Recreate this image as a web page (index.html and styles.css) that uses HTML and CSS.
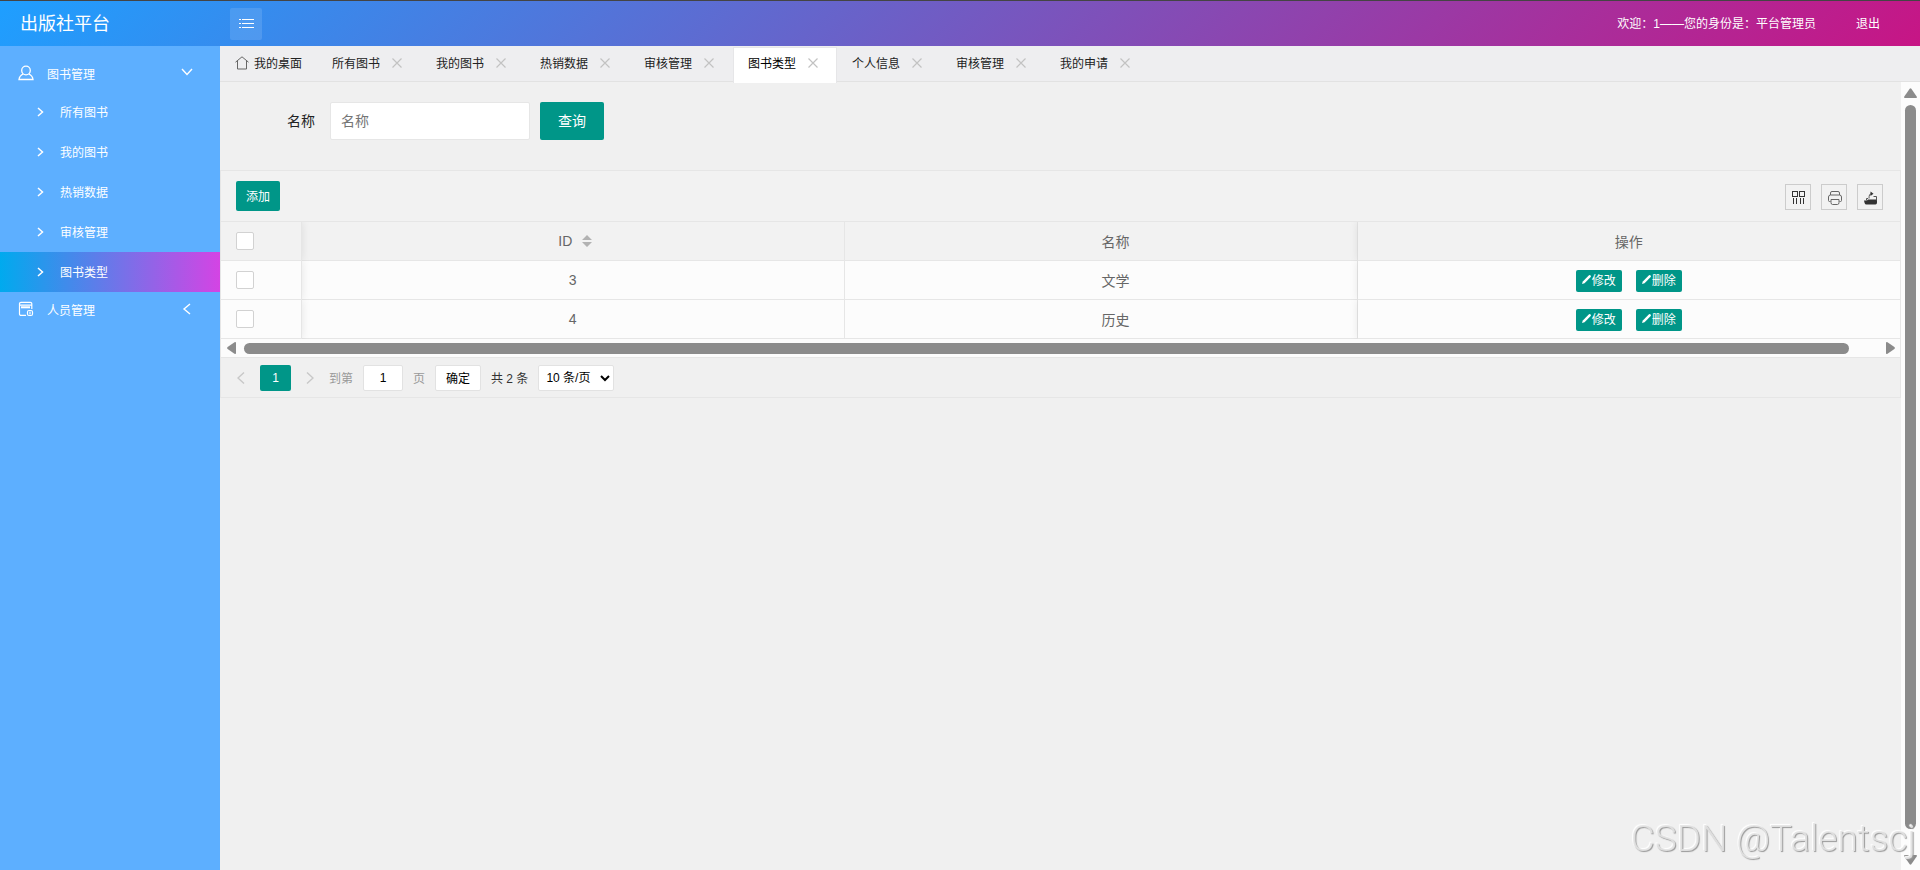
FILE: index.html
```html
<!DOCTYPE html>
<html lang="zh-CN">
<head>
  <meta charset="UTF-8" />
  <meta name="viewport" content="width=device-width, initial-scale=1.0"/>
  <title>出版社平台</title>
  <link rel="stylesheet" href="styles.css">
</head>
<body>
  <header class="header">
    <h1 class="logo">出版社平台</h1>
    <button type="button" class="menu-toggle" aria-label="菜单">
      <svg width="15" height="10" viewBox="0 0 15 10" stroke="currentColor" shape-rendering="crispEdges"><path d="M0 .5h2M3 .5h12M0 4.5h2M3 4.5h12M0 8.5h2M3 8.5h12"/></svg>
    </button>
    <span class="welcome">欢迎：1——您的身份是：平台管理员</span>
    <a href="#" class="logout">退出</a>
  </header>

  <div class="layout">
    <nav class="sidebar">
      <a href="#" class="nav-group">
        <svg width="16" height="16" viewBox="0 0 16 16" fill="none" stroke="currentColor" stroke-width="1.3"><circle cx="8" cy="5.5" r="4.3"/><path d="M5.2 9C3 10 1.3 11.500 1 14.500h14C14.700 11.500 13 10 10.800 9"/></svg>
        <span>图书管理</span>
        <svg class="arrow" width="12" height="12" viewBox="0 0 12 12" fill="none" stroke="currentColor" stroke-width="1.4"><path d="M1 2l5 5.500L11 2"/></svg>
      </a>
      <ul class="sub-nav">
        <li><a href="#"><svg width="7" height="10" viewBox="0 0 7 10"><path d="M1 1l4.500 4L1 9"/></svg>所有图书</a></li>
        <li><a href="#"><svg width="7" height="10" viewBox="0 0 7 10"><path d="M1 1l4.500 4L1 9"/></svg>我的图书</a></li>
        <li><a href="#"><svg width="7" height="10" viewBox="0 0 7 10"><path d="M1 1l4.500 4L1 9"/></svg>热销数据</a></li>
        <li><a href="#"><svg width="7" height="10" viewBox="0 0 7 10"><path d="M1 1l4.500 4L1 9"/></svg>审核管理</a></li>
        <li><a href="#" class="current"><svg width="7" height="10" viewBox="0 0 7 10"><path d="M1 1l4.500 4L1 9"/></svg>图书类型</a></li>
      </ul>
      <a href="#" class="nav-group">
        <svg width="16" height="16" viewBox="0 0 16 16" fill="none" stroke="currentColor" stroke-width="1.2"><path d="M8 14.400H3a1.500 1.500 0 0 1-1.500-1.500V2.800A1.500 1.500 0 0 1 3 1.300h9.300a1.500 1.500 0 0 1 1.500 1.500V8M2 4.200h11.500"/><path d="M3 6.300h9" stroke-width="2"/><rect x="9.500" y="9.500" width="5" height="5" rx="1.500"/><path d="M12 10.500v3"/></svg>
        <span>人员管理</span>
        <svg class="arrow" width="12" height="12" viewBox="0 0 12 12" fill="none" stroke="currentColor" stroke-width="1.4"><path d="M9 1L3 6l6 5"/></svg>
      </a>
    </nav>

    <main class="main">
      <div class="tabs">
        <a href="#" class="tab tab-home">
          <svg width="14" height="14" viewBox="0 0 14 14" fill="none" stroke="currentColor"><path d="M.5 6.200L7 .8l6.500 5.400M2.500 5v8h9V5"/></svg>我的桌面</a>
        <a href="#" class="tab">所有图书<svg class="close" width="10" height="10" viewBox="0 0 10 10"><path d="M.5.5l9 9M9.500.5l-9 9"/></svg></a>
        <a href="#" class="tab">我的图书<svg class="close" width="10" height="10" viewBox="0 0 10 10"><path d="M.5.5l9 9M9.500.5l-9 9"/></svg></a>
        <a href="#" class="tab">热销数据<svg class="close" width="10" height="10" viewBox="0 0 10 10"><path d="M.5.5l9 9M9.500.5l-9 9"/></svg></a>
        <a href="#" class="tab">审核管理<svg class="close" width="10" height="10" viewBox="0 0 10 10"><path d="M.5.5l9 9M9.500.5l-9 9"/></svg></a>
        <a href="#" class="tab active">图书类型<svg class="close" width="10" height="10" viewBox="0 0 10 10"><path d="M.5.5l9 9M9.500.5l-9 9"/></svg></a>
        <a href="#" class="tab">个人信息<svg class="close" width="10" height="10" viewBox="0 0 10 10"><path d="M.5.5l9 9M9.500.5l-9 9"/></svg></a>
        <a href="#" class="tab">审核管理<svg class="close" width="10" height="10" viewBox="0 0 10 10"><path d="M.5.5l9 9M9.500.5l-9 9"/></svg></a>
        <a href="#" class="tab">我的申请<svg class="close" width="10" height="10" viewBox="0 0 10 10"><path d="M.5.5l9 9M9.500.5l-9 9"/></svg></a>
      </div>

      <div class="frame">
        <div class="content">
          <form class="search">
            <label for="name">名称</label>
            <input type="text" id="name" name="name" placeholder="名称" />
            <button type="button" class="btn">查询</button>
          </form>

          <div class="table-box">
            <div class="toolbar">
              <button type="button" class="btn btn-sm">添加</button>
              <div class="tools">
                <button type="button" class="tool" aria-label="筛选列">
                  <svg width="14" height="14" viewBox="0 0 14 14" fill="none" stroke="#333" shape-rendering="crispEdges"><path d="M.5.5h5v5h-5zM7.500.5h5v5h-5zM1.500 7v6M4.500 7v6M8.500 7v6M11.500 7v6"/></svg>
                </button>
                <button type="button" class="tool" aria-label="打印">
                  <svg width="14" height="14" viewBox="0 0 14 14" fill="none" stroke="#666"><path d="M2.500 4V2Q2.500.5 4 .5h6q1.500 0 1.500 1.500v2M2.500 10.500H1.500q-1 0-1-1V6q0-2 2-2h9q2 0 2 2v3.500q0 1-1 1h-1M3 8.500h8v3q0 2-1.500 2h-5Q3 13.500 3 11.500z"/><path d="M3 4.500h8" stroke="#aaa"/></svg>
                </button>
                <button type="button" class="tool" aria-label="导出">
                  <svg width="14" height="14" viewBox="0 0 14 14" fill="#333"><path d="M0 9.500h3L4 8.500h9v3q0 2-1.500 2h-9Q1 13.500 .6 12z"/><path d="M2.500 9.500V7.500H4M9.500 5.500h3v4M5 7.500c0-3 .5-4.500 2.500-5" fill="none" stroke="#555"/><path d="M6.500 .5L9.500 2.800 6.500 5z"/></svg>
                </button>
              </div>
            </div>

            <table class="table">
              <colgroup>
                <col class="col-check">
                <col>
                <col class="col-name">
                <col>
              </colgroup>
              <thead>
                <tr>
                  <th class="fixed-left"><input type="checkbox" aria-label="全选" /></th>
                  <th>ID<svg class="sort" width="10" height="12" viewBox="0 0 10 12" fill="#b2b2b2"><path d="M0 5l5-5 5 5zM0 7h10l-5 5z"/></svg></th>
                  <th class="cell-name">名称</th>
                  <th class="fixed-right">操作</th>
                </tr>
              </thead>
              <tbody>
                <tr>
                  <td class="fixed-left"><input type="checkbox" aria-label="选择 3" /></td>
                  <td>3</td>
                  <td class="cell-name">文学</td>
                  <td class="fixed-right">
                    <div class="actions">
                      <button type="button" class="btn btn-xs"><svg width="9" height="9" viewBox="0 0 9 9"><path d="M0 9l.8-2.500L7 .3q1-.5 1.600.2t.1 1.500L2.500 8.200z"/></svg>修改</button>
                      <button type="button" class="btn btn-xs"><svg width="9" height="9" viewBox="0 0 9 9"><path d="M0 9l.8-2.500L7 .3q1-.5 1.600.2t.1 1.500L2.500 8.200z"/></svg>删除</button>
                    </div>
                  </td>
                </tr>
                <tr>
                  <td class="fixed-left"><input type="checkbox" aria-label="选择 4" /></td>
                  <td>4</td>
                  <td class="cell-name">历史</td>
                  <td class="fixed-right">
                    <div class="actions">
                      <button type="button" class="btn btn-xs"><svg width="9" height="9" viewBox="0 0 9 9"><path d="M0 9l.8-2.500L7 .3q1-.5 1.600.2t.1 1.500L2.500 8.200z"/></svg>修改</button>
                      <button type="button" class="btn btn-xs"><svg width="9" height="9" viewBox="0 0 9 9"><path d="M0 9l.8-2.500L7 .3q1-.5 1.600.2t.1 1.500L2.500 8.200z"/></svg>删除</button>
                    </div>
                  </td>
                </tr>
              </tbody>
            </table>

            <div class="scroll-x">
              <svg width="9" height="12" viewBox="0 0 9 12"><path d="M9 1v10q0 1.500-1.500.7L.6 7q-.9-1 0-2L7.500.3Q9-.5 9 1z"/></svg>
              <div class="thumb"></div>
              <svg width="9" height="12" viewBox="0 0 9 12"><path d="M0 1v10q0 1.500 1.500.7L8.400 7q.9-1 0-2L1.500.3Q0-.5 0 1z"/></svg>
            </div>

            <div class="pager">
              <a href="#" class="page-arrow" aria-label="上一页"><svg width="8" height="12" viewBox="0 0 8 12"><path d="M7 .5L1 6l6 5.500"/></svg></a>
              <span class="page-current">1</span>
              <a href="#" class="page-arrow" aria-label="下一页"><svg width="8" height="12" viewBox="0 0 8 12"><path d="M1 .5L7 6l-6 5.500"/></svg></a>
              <label class="skip">到第<input type="text" value="1" />页</label>
              <button type="button" class="page-ok">确定</button>
              <span class="total">共 2 条</span>
              <select class="limits" aria-label="每页条数">
                <option>10 条/页</option>
                <option>20 条/页</option>
                <option>30 条/页</option>
              </select>
            </div>
          </div>
        </div>

        <div class="scroll-y">
          <svg width="13" height="10" viewBox="0 0 13 10"><path d="M1 10h11q1.500 0 .7-1.500L7.300.8q-.8-.9-1.600 0L.3 8.500Q-.5 10 1 10z"/></svg>
          <div class="thumb"></div>
          <svg width="13" height="10" viewBox="0 0 13 10"><path d="M1 0h11q1.500 0 .7 1.500L7.300 9.200q-.8.9-1.600 0L.3 1.500Q-.5 0 1 0z"/></svg>
        </div>
      </div>
    </main>
  </div>

  <div class="watermark">CSDN @Talentscj</div>
</body>
</html>
```
FILE: styles.css
```css
* {
  box-sizing: border-box;
  margin: 0;
  padding: 0;
}

body {
  display: flex;
  flex-direction: column;
  height: 100vh;
  overflow: hidden;
  font-family: 'Liberation Sans', 'Noto Sans CJK SC', sans-serif;
  font-size: 12px;
  color: #222;
  background: #f0f0f0;
}

a {
  color: inherit;
  text-decoration: none;
}

button,
input,
select {
  font-family: inherit;
  font-size: inherit;
}

button {
  cursor: pointer;
}

svg {
  flex: none;
}

/* header */
.header {
  display: flex;
  align-items: center;
  flex: none;
  height: 46px;
  padding: 0 40px 0 20px;
  border-top: 1px solid #444;
  background: linear-gradient(135deg, #1e9fff, #c71585);
  color: #fff;
}

.logo,
.welcome,
.logout {
  padding-bottom: 3px;
}

.logo {
  width: 210px;
  font-size: 18px;
  font-weight: 400;
}

.menu-toggle {
  display: flex;
  align-items: center;
  justify-content: center;
  width: 32px;
  height: 32px;
  border: none;
  border-radius: 2px;
  background: rgba(255, 255, 255, 0.12);
  color: #fff;
}

.welcome {
  margin-left: auto;
}

.logout {
  margin-left: 40px;
}

.layout {
  display: flex;
  flex: 1;
  min-height: 0;
}

/* sidebar */
.sidebar {
  flex: none;
  width: 220px;
  padding-top: 10px;
  background: #5dafff;
  color: #fff;
}

.nav-group {
  display: flex;
  align-items: center;
  gap: 13px;
  height: 36px;
  padding: 0 27px 2px 18px;
}

.nav-group .arrow {
  margin-left: auto;
}

.sub-nav {
  list-style: none;
}

.sub-nav a {
  display: flex;
  align-items: center;
  gap: 16px;
  height: 40px;
  padding: 0 0 1px 37px;
}

.sub-nav svg {
  fill: none;
  stroke: #fff;
  stroke-width: 1.5;
}

.sub-nav .current {
  background: linear-gradient(to right, #00aaee, #d444e4);
}

/* tabs */
.main {
  display: flex;
  flex: 1;
  flex-direction: column;
  min-width: 0;
}

.tabs {
  display: flex;
  flex: none;
  height: 36px;
  border-bottom: 1px solid #e2e2e2;
  background: #eeeef0;
}

.tab {
  display: flex;
  align-items: center;
  gap: 12px;
  width: 104px;
  height: 35px;
  padding: 0 0 2px 14px;
}

.tab-home {
  gap: 5px;
  width: 98px;
  padding-left: 15px;
}

.tab-home svg {
  color: #666;
}

.close {
  fill: none;
  stroke: #c2c2c2;
  stroke-width: 1.2;
}

.tab.active {
  position: relative;
  width: 102px;
  margin: 2px 2px 0 0;
  padding-bottom: 6px;
  background: #fff;
  box-shadow: 0 0 0 1px #e6e6e8;
  clip-path: inset(-1px -1px 0 -1px);
  color: #000;
}

.frame {
  display: flex;
  flex: 1;
  min-height: 0;
}

.content {
  flex: 1;
  min-width: 0;
}

/* search form */
.search {
  display: flex;
  align-items: center;
  gap: 10px;
  padding: 20px 0 30px 67px;
  font-size: 14px;
}

.search label {
  margin-right: 5px;
  padding-bottom: 2px;
}

.search input {
  width: 200px;
  height: 38px;
  padding-left: 10px;
  border: 1px solid #e6e6e6;
  border-radius: 2px;
}

.search input::placeholder {
  color: #757575;
}

.btn {
  height: 38px;
  padding: 0 18px 2px;
  border: none;
  border-radius: 2px;
  background: #009688;
  color: #fff;
}

.btn-sm {
  height: 30px;
  padding: 0 10px 2px;
}

.btn-xs {
  display: flex;
  align-items: center;
  gap: 1px;
  width: 46px;
  height: 22px;
  padding: 0 6px 2px;
  font-size: 12px;
}

.btn-xs svg {
  fill: #fff;
}

/* table */
.table-box {
  border: 1px solid #e6e6e6;
}

.toolbar {
  display: flex;
  align-items: center;
  justify-content: space-between;
  height: 51px;
  padding: 0 17px 0 15px;
  border-bottom: 1px solid #e6e6e6;
  background: #f2f2f2;
}

.tools {
  display: flex;
  gap: 10px;
  padding-top: 2px;
}

.tool {
  display: flex;
  align-items: center;
  justify-content: center;
  width: 26px;
  height: 26px;
  padding: 2px 0 0 2px;
  border: 1px solid #ccc;
  background: none;
}

.table {
  width: 100%;
  table-layout: fixed;
  border-spacing: 0;
  background: #fcfcfc;
  color: #666;
  font-size: 14px;
}

.col-check {
  width: 81px;
}

.col-name {
  width: 513px;
}

.table th,
.table td {
  height: 39px;
  border-right: 1px solid #e6e6e6;
  border-bottom: 1px solid #e6e6e6;
  font-weight: 400;
  text-align: center;
}

.table th {
  background: #f2f2f2;
}

.table .cell-name {
  padding-left: 30px;
}

.table .fixed-left {
  padding-left: 15px;
  text-align: left;
  box-shadow: 1px 0 8px rgba(0, 0, 0, 0.08);
  clip-path: inset(0 -10px 0 0);
}

.table .fixed-right {
  border-right: none;
  box-shadow: -1px 0 8px rgba(0, 0, 0, 0.08);
  clip-path: inset(0 0 0 -10px);
}

.table input {
  display: block;
  width: 18px;
  height: 18px;
  appearance: none;
  border: 1px solid #d2d2d2;
  border-radius: 2px;
  background: #fff;
}

.sort {
  margin: 0 -5px 0 10px;
  vertical-align: -1px;
}

.actions {
  display: flex;
  justify-content: center;
  gap: 14px;
  padding-top: 1px;
}

/* scrollbars */
.scroll-x,
.scroll-y {
  display: flex;
  align-items: center;
  background: #fcfcfc;
  fill: #8b8b8b;
}

.scroll-x {
  gap: 8px;
  height: 18px;
  padding: 0 5px 0 6px;
}

.scroll-y {
  flex: none;
  flex-direction: column;
  gap: 7px;
  width: 19px;
  padding: 6px 0 5px;
}

.thumb {
  flex: 1;
  border-radius: 6px;
  background: #8b8b8b;
}

.scroll-x .thumb {
  height: 11px;
  margin-right: 29px;
}

.scroll-y .thumb {
  width: 11px;
  margin-bottom: 19px;
}

/* pagination */
.pager {
  display: flex;
  align-items: center;
  height: 40px;
  padding-left: 16px;
  border-top: 1px solid #e6e6e6;
}

.page-arrow {
  display: flex;
}

.page-arrow svg {
  fill: none;
  stroke: #c8c8c8;
  stroke-width: 1.4;
}

.page-current {
  width: 31px;
  height: 26px;
  margin: 0 15px;
  border-radius: 2px;
  background: #009688;
  color: #fff;
  line-height: 26px;
  text-align: center;
}

.skip {
  display: flex;
  align-items: center;
  gap: 10px;
  margin: 0 10px 0 15px;
  color: #999;
}

.skip input {
  width: 40px;
  text-align: center;
}

.skip input,
.page-ok,
.limits {
  height: 26px;
  border: 1px solid #e2e2e2;
  border-radius: 2px;
  background: #fff;
  color: #000;
}

.page-ok {
  width: 46px;
}

.total {
  margin: 0 10px;
  color: #333;
}

.limits {
  width: 76px;
  padding-left: 3px;
}

.watermark {
  position: fixed;
  right: 4px;
  bottom: 9px;
  color: rgba(228, 228, 228, 0.9);
  font-family: Roboto, sans-serif;
  font-size: 37px;
  font-weight: 300;
  line-height: 44px;
  text-shadow: 1px 1px 1px #999, -1px -1px 1px #fff;
  pointer-events: none;
}
```
